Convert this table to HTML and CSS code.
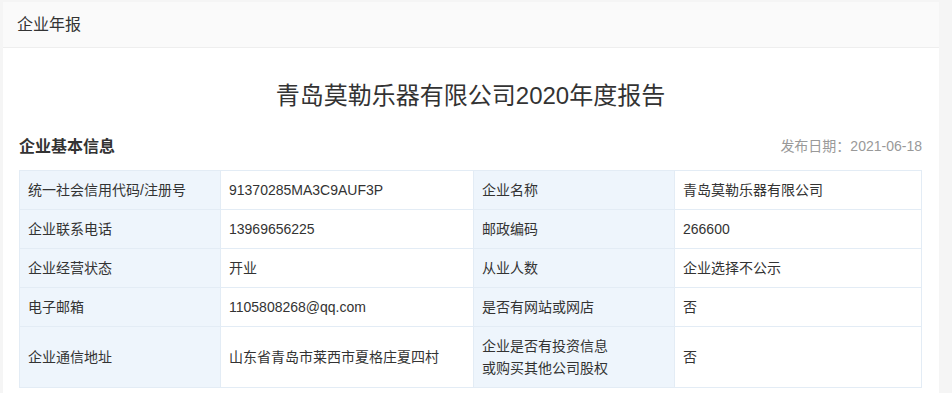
FILE: index.html
```html
<!DOCTYPE html>
<html lang="zh-CN">
<head>
  <meta charset="UTF-8">
  <meta name="viewport" content="width=device-width, initial-scale=1.0">
  <title>企业年报</title>
  <link rel="stylesheet" href="styles.css">
</head>
<body>
  <div class="panel">
    <div class="panel-head">企业年报</div>
    <div class="panel-body">
      <h1 class="report-title">青岛莫勒乐器有限公司2020年度报告</h1>

      <div class="section-head">
        <h2>企业基本信息</h2>
        <span class="pub-date">发布日期：2021-06-18</span>
      </div>

      <table class="info-table">
        <colgroup>
          <col class="c-label">
          <col class="c-value">
          <col class="c-label">
          <col>
        </colgroup>
        <tr>
          <td class="tb">统一社会信用代码/注册号</td>
          <td>91370285MA3C9AUF3P</td>
          <td class="tb">企业名称</td>
          <td>青岛莫勒乐器有限公司</td>
        </tr>
        <tr>
          <td class="tb">企业联系电话</td>
          <td>13969656225</td>
          <td class="tb">邮政编码</td>
          <td>266600</td>
        </tr>
        <tr>
          <td class="tb">企业经营状态</td>
          <td>开业</td>
          <td class="tb">从业人数</td>
          <td>企业选择不公示</td>
        </tr>
        <tr>
          <td class="tb">电子邮箱</td>
          <td>1105808268@qq.com</td>
          <td class="tb">是否有网站或网店</td>
          <td>否</td>
        </tr>
        <tr>
          <td class="tb">企业通信地址</td>
          <td>山东省青岛市莱西市夏格庄夏四村</td>
          <td class="tb">企业是否有投资信息<br>或购买其他公司股权</td>
          <td>否</td>
        </tr>
      </table>
    </div>
  </div>
</body>
</html>
```

FILE: styles.css
```css
body { margin: 0; padding: 2px 13px 0 3px; background: #f5f5f5; color: #333; font-family: "Liberation Sans", "Noto Sans CJK SC", sans-serif; }
.panel { background: #fff; min-height: 420px; }
.panel-head { height: 45px; line-height: 45px; padding: 0 14px; background: #fafafa; border-bottom: 1px solid #eee; font-size: 16px; color: #333; }
.panel-body { padding: 0 17px 0 16px; }
.report-title { margin: 0; padding-top: 31px; font-size: 24px; line-height: 34px; font-weight: normal; text-align: center; color: #333; }
.section-head { display: flex; justify-content: space-between; align-items: center; margin-top: 20px; height: 24px; }
.section-head h2 { margin: 0; font-size: 16px; font-weight: bold; color: #333; }
.pub-date { font-size: 14px; color: #999; }
.info-table { width: 100%; margin-top: 13px; border-collapse: collapse; table-layout: fixed; font-size: 14px; line-height: 22px; }
.info-table .c-label { width: 201px; }
.info-table .c-value { width: 253px; }
.info-table td { padding: 8px 8px 8px 8px; border: 1px solid #e3ecf5; vertical-align: middle; color: #333; }
.info-table td.tb { background: #eef5fc; }
```
